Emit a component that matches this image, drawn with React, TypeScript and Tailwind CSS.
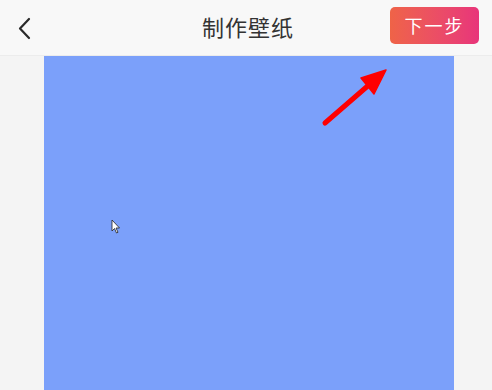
import React from "react";

export default function App() {
  return (
    <div className="relative w-[492px] h-[390px] overflow-hidden bg-[#f4f4f4]" style={{ fontFamily: '"Noto Sans CJK SC", "Noto Sans", sans-serif' }}>
      <div className="h-[56px] bg-[#f8f8f8] border-b border-[#ececec] flex items-center justify-between pl-[17px] pr-[13px]">
        <svg width="16" height="24" viewBox="0 0 16 24" className="mt-[1px]">
          <path d="M12 3 L3 12.5 L12 22" fill="none" stroke="#2a2a2a" strokeWidth="2.2" strokeLinecap="round" strokeLinejoin="round" />
        </svg>
        <div className="absolute left-0 right-0 top-0 h-[52px] flex items-center justify-center pointer-events-none">
          <span className="text-[22px] text-[#333333] ml-[4px] tracking-[1px]">制作壁纸</span>
        </div>
        <button className="w-[89px] h-[37px] rounded-[5px] bg-gradient-to-r from-[#ef6347] to-[#e8347a] text-white text-[18px] flex items-center justify-center tracking-[2px] -mt-[4px]">
          下一步
        </button>
      </div>
      <div className="ml-[44px] w-[410px] h-[334px] bg-[#7ba0fa]" />
      <svg className="absolute left-0 top-0" width="492" height="390" viewBox="0 0 492 390">
        <line x1="325" y1="123" x2="370" y2="84" stroke="#ff0000" strokeWidth="5" strokeLinecap="round" />
        <polygon points="386,70 361,78 374,94" fill="#ff0000" stroke="#ff0000" strokeWidth="1.5" strokeLinejoin="round" />
        <path d="M112 220 L112 231 L114.5 228.5 L116.5 233 L118 232.3 L116 228 L119.5 228 Z" fill="#ffffff" stroke="#222" strokeWidth="0.8" />
      </svg>
    </div>
  );
}
